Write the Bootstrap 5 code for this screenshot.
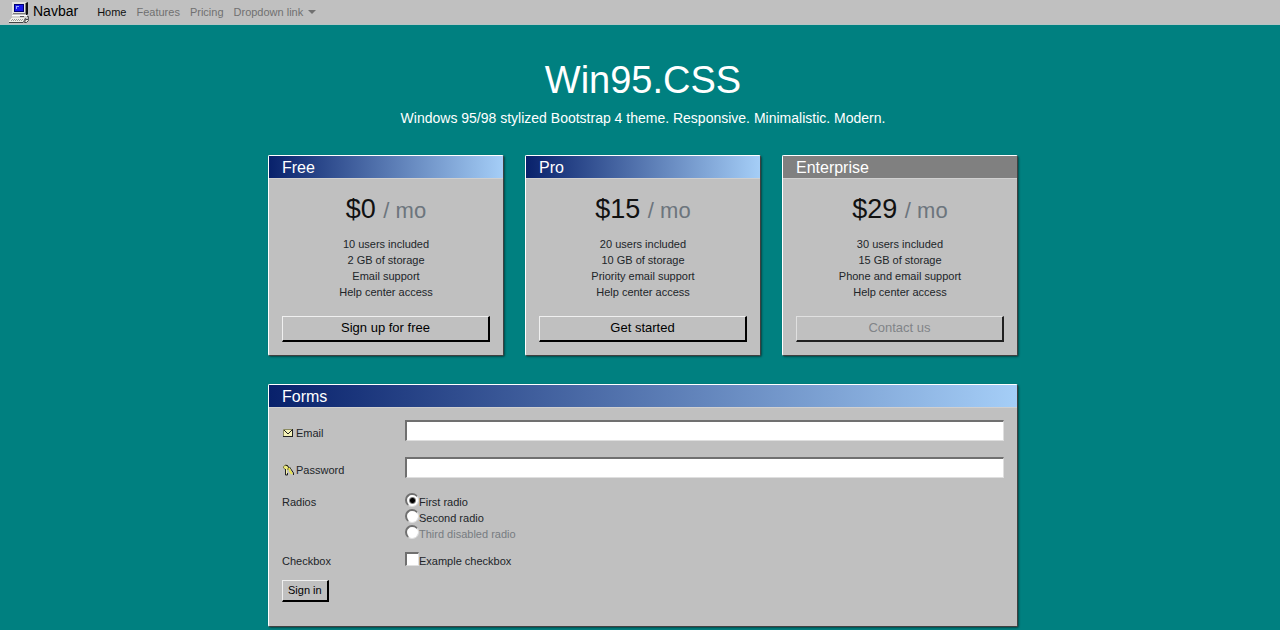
<!DOCTYPE html>
<html lang="en">
<head>
<meta charset="utf-8">
<meta name="viewport" content="width=device-width, initial-scale=1">
<title>Win95.CSS</title>
<link href="https://cdn.jsdelivr.net/npm/bootstrap@5.3.0/dist/css/bootstrap.min.css" rel="stylesheet">
<style>
body { background: #008080; color: #212529; font-family: "Liberation Sans", Arial, sans-serif; font-size: 11px; line-height: 16px; }
.taskbar { background: #c0c0c0; border-bottom: 1px solid #b4c4c4; padding: 0 8px; min-height: 25px; }
.taskbar .navbar-brand { font-size: 14px; line-height: 16px; color: #000; gap: 2px; margin-right: 14px; padding: 0; }
.taskbar .navbar-brand span { padding-bottom: 2px; }
.taskbar .navbar-nav .nav-link { font-size: 11px; line-height: 16px; padding: 0 5px; color: #707070; }
.taskbar .navbar-nav .nav-link.active { color: #111; }
.taskbar .dropdown-toggle::after { margin-left: 5px; vertical-align: 2px; border-width: 4px 4px 0; }
.taskbar .dropdown-menu { background: #c0c0c0; border-radius: 0; font-size: 11px; }
.desktop { max-width: 778px; padding: 0 11px 28px 17px; }
.hero { padding: 32px 0 29px; }
.hero h1 { font-size: 38px; line-height: 46px; font-weight: 400; margin: 0 0 7px; }
.hero p { font-size: 14px; line-height: 16px; margin: 0; }
.plans { --bs-gutter-x: 21px; }
.window { background: #c0c0c0; border: 1px solid; border-color: #fff #404040 #404040 #fff; border-radius: 2px; box-shadow: 1px 1px 2px #004848; color: inherit; }
.window .card-header { background: linear-gradient(90deg, #08216b, #a5cef7); color: #fff; padding: 0 13px; border-bottom: 1px solid #d0d0d0; border-radius: 0; }
.window .card-header h2 { font-size: 16px; line-height: 18px; font-weight: 400; margin: 0; padding: 3px 0 1px; }
.window.inactive .card-header { background: #808080; }
.window .card-body { padding: 13px; }
.price { font-size: 27px; line-height: 32px; font-weight: 400; margin: 0 0 9px; padding-top: 1px; color: #111; }
.price small { font-size: 22px; color: #6c757d; }
.features { margin: 0 0 16px; line-height: 16px; }
.bevel { background: #c0c0c0; color: #000; border: solid; border-width: 1px 2px 2px 1px; border-color: #f0f0f0 #000 #000 #f0f0f0; border-radius: 0; font-size: 11px; line-height: 16px; padding: 1px 5px 2px; }
.bevel:hover, .bevel:active { background: #c0c0c0; color: #000; border-color: #f0f0f0 #000 #000 #f0f0f0; }
.bevel-wide { font-size: 13px; line-height: 20px; padding: 1px 5px 2px; }
.bevel:disabled { background: #c0c0c0; color: #808488; opacity: 1; border-color: #e0e0e0 #202020 #202020 #e0e0e0; }
.signup { margin-top: 28px; }
.signup form.card-body { padding: 12px 13px 24px; }
.fields { display: grid; grid-template-columns: 123px 1fr; }
.fields .form-control { height: 21px; min-height: 0; padding: 0 4px; font-size: 11px; border-radius: 0; background: #fff; border: solid; border-width: 2px 1px 1px 2px; border-color: #707070 #dfdfdf #dfdfdf #707070; box-shadow: none; }
.fields .line { margin-bottom: 16px; }
.fields .caption { padding-top: 5px; line-height: 16px; }
.fields .caption svg { width: 12px; height: 12px; margin: 0 2px 0 0; vertical-align: -2px; }
.fields .radios { margin-bottom: 11px; }
.choice { display: flex; align-items: center; height: 16px; }
.choice input { appearance: none; flex: none; width: 14px; height: 14px; margin: 0 0 4px; background: #fff; border: solid; border-width: 2px 1px 1px 2px; border-color: #707070 #e0e0e0 #e0e0e0 #707070; }
.choice input[type=radio] { border-radius: 50%; }
.choice input[type=radio]:checked { background: radial-gradient(circle at 50% 50%, #000 2px, #fff 4px); }
.choice input:disabled + label { color: #777c80; }
.send { margin-top: 11px; }
</style>
</head>
<body>
<nav class="navbar navbar-expand taskbar">
  <a class="navbar-brand d-flex align-items-center" href="#">
    <svg width="23" height="23" viewBox="0 0 23 23" aria-hidden="true">
      <path fill="#222" d="M6 14h13v3H6z"/>
      <path fill="#111" d="M18 2l2-1v12l-2 2z"/>
      <path fill="#e4e4e0" d="M4 1h14v12H4z"/>
      <path fill="#808080" d="M17 2h1v11H5v-1h12z"/>
      <path fill="#000070" d="M6 3h10v8H6z"/>
      <path fill="#1818e8" d="M7 4h8v6H7z"/>
      <path fill="#9cacff" d="M8 5h3v1H9v2H8z"/>
      <path fill="#d4d4d0" d="M4 14h15v3H4z"/>
      <path fill="#fff" d="M4 14h15v1H4z"/>
      <path fill="#444" d="M3 17h15l-3 5H1v-1z"/>
      <path fill="#f0f0e8" d="M3 17h14l-2 4H1v-1z"/>
      <path fill="none" stroke="#999" stroke-dasharray="1 1" d="M4 18.500h11M3 19.500h11"/>
      <path fill="#555" d="M12 15h4v1h-4z"/>
      <path fill="#e8e8e0" stroke="#444" d="M17.500 18.500h3v1l-2 2h-2z"/>
      <path fill="none" stroke="#555" d="M19 15.500h1.500V18"/>
    </svg>
    <span>Navbar</span>
  </a>
  <ul class="navbar-nav">
    <li class="nav-item"><a class="nav-link active" aria-current="page" href="#">Home</a></li>
    <li class="nav-item"><a class="nav-link" href="#">Features</a></li>
    <li class="nav-item"><a class="nav-link" href="#">Pricing</a></li>
    <li class="nav-item dropdown">
      <a class="nav-link dropdown-toggle" href="#" role="button" data-bs-toggle="dropdown" aria-expanded="false">Dropdown link</a>
      <ul class="dropdown-menu">
        <li><a class="dropdown-item" href="#">Action</a></li>
      </ul>
    </li>
  </ul>
</nav>

<main class="container desktop">
  <header class="hero text-center text-white">
    <h1>Win95.CSS</h1>
    <p>Windows 95/98 stylized Bootstrap 4 theme. Responsive. Minimalistic. Modern.</p>
  </header>

  <div class="row plans row-cols-3 text-center">
    <div class="col">
      <section class="card window">
        <div class="card-header text-start"><h2>Free</h2></div>
        <div class="card-body">
          <h3 class="price">$0 <small>/ mo</small></h3>
          <ul class="list-unstyled features">
            <li>10 users included</li><li>2 GB of storage</li><li>Email support</li><li>Help center access</li>
          </ul>
          <button type="button" class="btn bevel bevel-wide w-100">Sign up for free</button>
        </div>
      </section>
    </div>
    <div class="col">
      <section class="card window">
        <div class="card-header text-start"><h2>Pro</h2></div>
        <div class="card-body">
          <h3 class="price">$15 <small>/ mo</small></h3>
          <ul class="list-unstyled features">
            <li>20 users included</li><li>10 GB of storage</li><li>Priority email support</li><li>Help center access</li>
          </ul>
          <button type="button" class="btn bevel bevel-wide w-100">Get started</button>
        </div>
      </section>
    </div>
    <div class="col">
      <section class="card window inactive">
        <div class="card-header text-start"><h2>Enterprise</h2></div>
        <div class="card-body">
          <h3 class="price">$29 <small>/ mo</small></h3>
          <ul class="list-unstyled features">
            <li>30 users included</li><li>15 GB of storage</li><li>Phone and email support</li><li>Help center access</li>
          </ul>
          <button type="button" class="btn bevel bevel-wide w-100" disabled>Contact us</button>
        </div>
      </section>
    </div>
  </div>

  <section class="card window signup">
    <div class="card-header"><h2>Forms</h2></div>
    <form class="card-body">
      <div class="fields">
        <label class="caption" for="email"><svg viewBox="0 0 12 12" aria-hidden="true"><path fill="#f5f2b8" stroke="#8a8a60" d="M1.500 2.500h9v7h-9z"/><path fill="none" stroke="#222" d="M2 3l4 4 4-4M1 9.500h10M10.500 2v8"/></svg>Email</label>
        <div class="line"><input type="email" class="form-control" id="email"></div>
        <label class="caption" for="password"><svg viewBox="0 0 12 12" aria-hidden="true"><path fill="#eeea7c" stroke="#77763c" d="M1.500 2.500l2-1.500 2 .500 1 2-1 2H3.500L1.500 4z"/><path fill="none" stroke="#222" d="M3.500 1.500h2l1 2v2M3.500 5v6h2V9M7.500 3l4 6v2"/><path fill="none" stroke="#e6e24c" stroke-width="2" d="M7 4l1 3 2 3"/><path fill="none" stroke="#f4f0a0" d="M4.500 5v5"/></svg>Password</label>
        <div class="line"><input type="password" class="form-control" id="password"></div>
        <div id="radio-caption">Radios</div>
        <div class="radios" role="radiogroup" aria-labelledby="radio-caption">
          <div class="choice"><input type="radio" name="choice" id="r1" checked><label for="r1">First radio</label></div>
          <div class="choice"><input type="radio" name="choice" id="r2"><label for="r2">Second radio</label></div>
          <div class="choice"><input type="radio" name="choice" id="r3" disabled><label for="r3">Third disabled radio</label></div>
        </div>
        <div>Checkbox</div>
        <div class="choice"><input type="checkbox" id="c1"><label for="c1">Example checkbox</label></div>
      </div>
      <button type="submit" class="btn bevel send">Sign in</button>
    </form>
  </section>
</main>
<script src="https://cdn.jsdelivr.net/npm/bootstrap@5.3.0/dist/js/bootstrap.bundle.min.js"></script>
</body>
</html>
